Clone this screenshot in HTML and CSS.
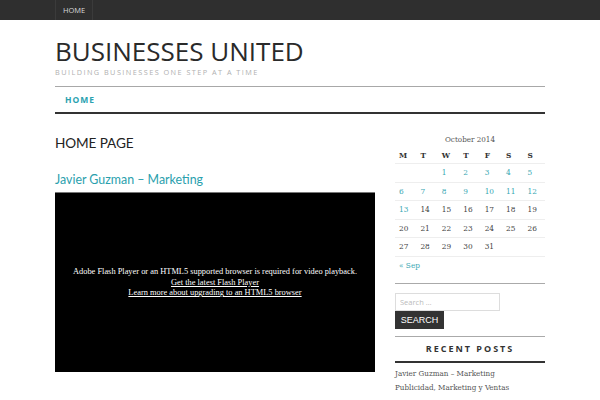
FILE: index.html
```html
<!DOCTYPE html>
<html>
<head>
<meta charset="utf-8">
<link rel="stylesheet" href="styles.css">
</head>
<body>
<div class="topbar">
  <div class="wrap">
    <a class="top-item" href="#">HOME</a>
  </div>
</div>
<div class="wrap">
  <header class="site-header">
    <h1 class="site-title">BUSINESSES UNITED</h1>
    <p class="tagline">BUILDING BUSINESSES ONE STEP AT A TIME</p>
  </header>
  <nav class="main-nav">
    <a href="#">HOME</a>
  </nav>
  <div class="layout">
    <main class="content">
      <h2 class="page-title">HOME PAGE</h2>
      <h3 class="post-title"><a href="#">Javier Guzman – Marketing</a></h3>
      <div class="video">
        <p>Adobe Flash Player or an HTML5 supported browser is required for video playback.<br>
        <a href="#">Get the latest Flash Player</a><br>
        <a href="#">Learn more about upgrading to an HTML5 browser</a></p>
      </div>
    </main>
    <aside class="sidebar">
      <table class="calendar">
        <caption>October 2014</caption>
        <thead>
          <tr><th>M</th><th>T</th><th>W</th><th>T</th><th>F</th><th>S</th><th>S</th></tr>
        </thead>
        <tbody>
          <tr><td></td><td></td><td class="l">1</td><td class="l">2</td><td class="l">3</td><td class="l">4</td><td class="l">5</td></tr>
          <tr><td class="l">6</td><td class="l">7</td><td class="l">8</td><td class="l">9</td><td class="l">10</td><td class="l">11</td><td class="l">12</td></tr>
          <tr><td class="l">13</td><td>14</td><td>15</td><td>16</td><td>17</td><td>18</td><td>19</td></tr>
          <tr><td>20</td><td>21</td><td>22</td><td>23</td><td>24</td><td>25</td><td>26</td></tr>
          <tr><td>27</td><td>28</td><td>29</td><td>30</td><td>31</td><td></td><td></td></tr>
          <tr class="nav-row"><td colspan="7" class="l">« Sep</td></tr>
        </tbody>
      </table>
      <div class="search">
        <input type="text" placeholder="Search …">
        <button>SEARCH</button>
      </div>
      <h4 class="widget-title">RECENT POSTS</h4>
      <ul class="recent">
        <li><a href="#">Javier Guzman – Marketing</a></li>
        <li><a href="#">Publicidad, Marketing y Ventas</a></li>
      </ul>
    </aside>
  </div>
</div>
</body>
</html>
```
FILE: styles.css
```css
html, body { margin: 0; padding: 0; background: #fff; }
body { font-family: "Open Sans", "DejaVu Sans", sans-serif; color: #333; overflow: hidden; }
a { text-decoration: none; color: inherit; }
.wrap { width: 490px; margin: 0 auto; }

.topbar { background: #2f2f2f; height: 20px; }
.topbar .wrap { display: flex; height: 20px; }
.top-item {
  display: block; height: 20px; line-height: 20px; padding: 0 7px;
  border-left: 1px solid #3b3b3b; border-right: 1px solid #3b3b3b;
  color: #d8d8d8; font-size: 7.5px; font-family: "Open Sans", sans-serif;
}

.site-header { padding-top: 17px; height: 49px; }
.site-title {
  margin: 0; font-size: 26px; font-weight: 400; line-height: 28px; color: #2a2a2a;
}
.tagline {
  margin: 3px 0 0; font-size: 7.3px; letter-spacing: 1.45px; color: #b0b0b0; line-height: 9px;
}

.main-nav {
  border-top: 1px solid #a8a8a8; border-bottom: 2px solid #333;
  height: 25px; display: flex; align-items: center; padding-left: 10px;
}
.main-nav a { color: #2aa2b0; font-weight: 700; font-size: 8.5px; letter-spacing: 1px; }

.layout { display: flex; gap: 20px; }
.content { width: 320px; }
.sidebar { width: 150px; }

.page-title {
  margin: 19px 0 0; font-family: Lato, "Open Sans", sans-serif; font-size: 13.6px;
  font-weight: 400; line-height: 20px; color: #222; letter-spacing: -0.1px;
}
.post-title {
  margin: 18px 0 0; font-family: Lato, "Open Sans", sans-serif; font-size: 12.4px;
  font-weight: 400; line-height: 18px; color: #2aa0ad;
}
.video {
  margin-top: 3px; height: 180px; background: #000; border-top: 1px solid #777;
  display: flex; align-items: center; justify-content: center; box-sizing: border-box;
}
.video p {
  margin: 0; color: #fff; text-align: center; font-family: "Liberation Serif", serif;
  font-size: 8.4px; line-height: 10.6px; padding-top: 1px;
}
.video a { text-decoration: underline; }

.calendar {
  width: 150px; border-collapse: collapse; margin-top: 19px;
  font-family: "DejaVu Serif Condensed", "DejaVu Serif", serif; font-size: 8.2px; color: #444;
}
.calendar caption { font-size: 8px; line-height: 14px; color: #555; padding-bottom: 0; }
.calendar th { font-weight: 700; text-align: left; padding: 0 0 0 4px; height: 16px; line-height: 16px; color: #333; }
.calendar td { text-align: left; padding: 0 0 0 4px; height: 17.6px; line-height: 17.6px; border-top: 1px solid #eee; }
.calendar td.l { color: #3aa8b3; }

.search {
  border-top: 1px solid #aaa; margin-top: 8px; padding-top: 9px; padding-bottom: 7px;
  border-bottom: 1px solid #aaa;
}
.search input {
  display: block; box-sizing: border-box; width: 105px; height: 18px; margin: 0;
  border: 1px solid #ddd; font-family: "Open Sans", sans-serif; font-size: 7.5px; padding: 0 4px;
  color: #999; outline: none;
}
.search input::placeholder { color: #bbb; }
.search button {
  display: block; width: 49px; height: 18px; margin: 0; border: 0; background: #333;
  color: #fff; font-family: "Liberation Sans", sans-serif; font-size: 9px; padding: 0;
}

.widget-title {
  margin: 0; text-align: center; font-size: 9px; font-weight: 700; letter-spacing: 2px;
  line-height: 24px; color: #333; border-bottom: 2px solid #333;
}
.recent { list-style: none; margin: 0; padding: 4px 0 0; font-family: "DejaVu Serif Condensed", "DejaVu Serif", serif; font-size: 8px; }
.recent li { line-height: 14px; color: #555; }
```
